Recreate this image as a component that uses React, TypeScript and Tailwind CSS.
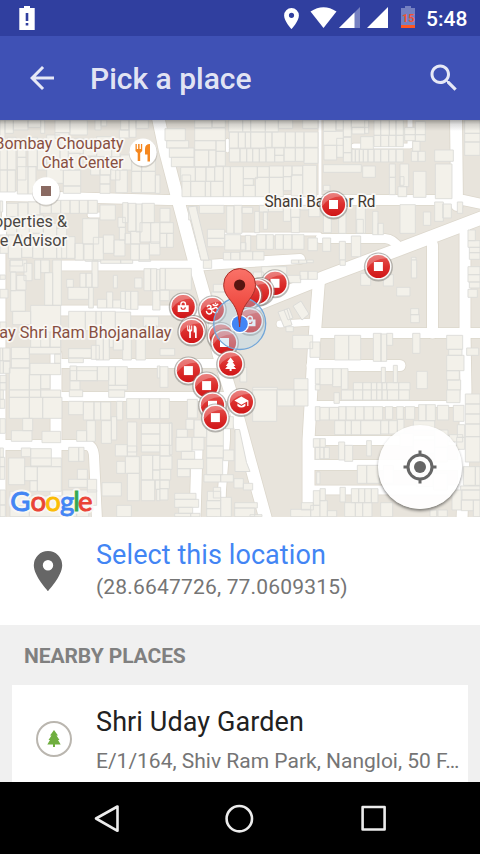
import React from 'react';

type Tile = { x: number; y: number; blocks: string };

// Building footprints per map tile, "x1 y1 x2 y2" at three units per pixel.
const TILES: Tile[] = [
  {
    x: 0,
    y: 120,
    blocks: `0 0 15 52;15 0 40 40;40 0 84 30;84 0 122 22;122 0 134 40;165 0 210 38;165 38 207 55;210 0 262 45;285 0 303 30;303 0 320 18;362 0 387 30;387 0 408 52;408 0 445 25;358 30 388 54;
      0 85 22 150;22 52 48 150;0 150 22 216;22 150 46 216;52 75 78 112;52 112 78 180;52 140 84 222;84 52 112 140;84 140 108 222;112 60 140 150;140 45 180 130;180 55 205 150;140 130 190 190;190 150 242 198;190 198 242 220;205 55 250 100;205 100 240 150;250 60 290 108;290 50 335 110;335 75 360 150;272 110 300 165;300 130 332 165;300 165 330 192;300 192 330 220;332 110 360 180;347 150 382 218;362 105 395 150;395 118 425 154;395 154 424 218;424 154 466 218;425 118 466 154;466 165 480 220;
      0 243 8 276;20 250 54 290;54 248 84 300;84 246 120 285;120 241 154 280;154 241 182 280;182 241 210 280;210 241 238 280;238 241 264 280;264 241 292 280;20 290 50 345;50 300 88 360;88 285 130 340;130 310 170 362;170 325 200 415;300 255 346 300;354 292 376 322;368 248 384 308;384 250 408 334;408 252 426 336;426 250 463 308;358 322 376 360;248 296 296 372;252 372 280 420;280 352 310 420;310 345 342 400;342 360 375 408;375 340 392 372;392 334 420 372;420 308 452 366;452 308 480 370;392 372 418 420;418 372 448 420;448 366 480 405;0 345 25 400;25 345 65 415;65 360 98 412;98 340 130 415;130 362 170 415;185 350 225 415;225 370 250 420`,
  },
  {
    x: 160,
    y: 120,
    blocks: `15 26 76 62;20 62 86 84;28 84 102 112;34 112 102 140;104 0 156 24;156 0 196 22;104 24 196 62;104 62 168 90;104 90 146 140;146 90 168 140;168 62 196 94;168 94 196 138;
      206 0 248 36;248 0 272 36;272 0 316 36;316 0 355 36;355 0 398 25;428 0 474 25;208 36 235 84;235 36 256 84;256 36 272 84;272 36 316 84;316 36 336 82;336 36 376 82;376 36 406 82;406 36 432 82;432 36 474 82;208 86 240 126;240 86 260 126;260 86 278 126;278 86 298 126;298 86 318 126;318 84 344 126;344 84 372 106;344 106 372 126;372 84 406 124;406 84 432 124;432 84 474 130;
      62 142 106 184;66 165 92 230;92 184 136 230;106 142 138 184;138 142 164 184;136 184 152 230;152 184 190 230;164 140 190 184;190 140 211 230;211 140 250 230;250 140 292 176;250 176 280 196;250 196 286 230;292 140 328 172;286 172 328 230;328 138 370 172;328 172 370 230;370 138 396 170;370 170 394 212;396 138 428 165;394 165 428 228;428 136 470 230;
      0 265 30 306;0 308 40 340;0 340 20 382;20 340 40 382;118 256 192 280;86 260 112 300;200 258 222 340;222 256 246 340;246 262 278 280;284 274 298 338;298 256 325 276;310 276 322 328;325 256 370 275;370 256 392 304;392 256 420 292;394 292 418 338;420 256 445 270;446 258 480 290;142 328 194 355;142 355 194 380;194 344 242 390;242 368 258 390;256 346 272 392;290 344 318 388;318 344 340 388;346 344 370 388;370 344 396 388;396 344 432 388;444 354 472 392;190 397 212 420;212 397 240 420;240 395 278 420;278 395 312 420`,
  },
  {
    x: 320,
    y: 120,
    blocks: `10 0 48 34;48 0 70 30;70 0 94 50;94 0 146 22;96 22 134 42;122 50 160 88;134 0 146 40;162 0 182 46;182 0 208 46;208 0 228 46;228 0 250 46;10 34 70 76;12 76 50 120;50 55 70 112;70 52 94 98;70 98 94 126;162 46 182 80;182 46 206 80;206 46 228 80;228 46 250 80;96 88 106 126;106 88 118 126;118 88 130 126;130 88 144 126;144 88 162 126;162 88 182 126;182 88 206 126;206 88 228 126;228 88 250 126;
      254 22 286 44;286 4 316 44;254 44 286 62;286 44 316 64;278 64 300 94;274 94 294 124;294 94 316 124;344 90 400 124;346 132 396 236;434 0 480 40;434 40 480 66;434 66 480 106;
      10 134 124 157;128 138 166 172;208 132 226 172;208 172 226 224;240 132 266 200;234 200 260 230;240 170 252 196;280 154 318 232;10 196 30 212;240 254 286 340;310 276 332 316;344 246 370 304;368 252 394 294;412 246 428 280;10 258 34 338;56 258 78 340;108 258 136 340;110 298 130 340;158 274 174 344;174 310 190 344;8 354 32 394;58 364 76 420;94 348 122 410;444 330 466 362;444 362 480 382;448 382 480 398;448 398 480 418;274 412 288 420`,
  },
  {
    x: 0,
    y: 260,
    blocks: `30 0 68 18;32 36 48 92;30 0 80 36;72 10 96 62;104 0 122 58;122 0 148 38;134 38 158 136;158 0 184 136;50 46 78 90;32 92 76 154;38 154 92 194;92 136 182 262;122 216 150 262;150 216 182 262;34 262 88 296;34 296 88 324;88 262 182 282;90 310 182 344;164 282 182 310;28 324 88 390;88 344 122 390;122 344 150 386;0 45 16 58;0 88 24 114;0 186 18 226;0 264 8 302;8 264 30 302;0 302 10 340;10 304 30 340;0 346 18 368;0 368 18 390;
      200 58 220 82;240 40 258 82;258 40 276 82;276 2 294 82;204 82 266 118;266 82 280 144;292 118 320 144;320 96 338 144;338 120 362 144;340 46 352 84;362 94 376 146;376 94 392 148;392 94 414 148;404 54 426 84;432 26 452 92;452 26 470 92;470 28 480 92;458 92 480 150;256 0 302 4;302 0 362 10;362 0 398 10;416 0 452 4;
      206 154 256 212;256 154 288 212;288 154 304 212;304 154 346 212;346 156 392 212;430 170 476 200;206 266 274 294;206 294 250 308;274 256 298 298;288 212 310 300;310 212 328 300;328 212 340 262;340 230 370 270;368 212 394 300;408 212 436 300;436 196 470 230;210 318 230 362;210 332 292 362;230 320 292 362;292 320 326 362;326 320 346 376;346 320 382 376;326 376 382 390;210 362 240 390;472 318 480 354`,
  },
  {
    x: 160,
    y: 260,
    blocks: `0 25 16 90;16 25 94 90;0 90 28 122;130 0 155 25;160 73 218 96;155 96 210 130;280 36 310 72;305 20 380 60;378 46 422 68;420 34 444 58;444 34 472 58;394 0 416 10;416 0 440 10;440 0 460 8;378 200 400 215;398 226 458 266;450 246 480 292;466 326 480 372;466 374 480 390;240 322 260 366;0 320 24 382;278 382 352 390;352 388 402 390;402 356 444 390;0 266 44 286;124 160 146 210`,
  },
  {
    x: 320,
    y: 260,
    blocks: `60 0 76 16;274 0 290 54;444 20 480 44;444 44 480 66;448 66 480 84;444 88 472 112;122 40 152 76;190 44 220 78;230 82 270 108;272 146 296 164;272 164 298 188;44 226 86 300;86 226 122 300;160 220 184 304;182 222 200 304;200 220 218 256;278 220 300 280;380 226 428 268;386 268 426 286;380 286 432 332;380 332 418 360;382 360 422 390;440 264 476 286;290 334 322 386;0 326 38 374;38 326 64 380;64 326 84 388;184 322 196 368;220 316 232 368;100 368 128 390;128 368 154 390;154 368 170 390;170 368 186 390;186 368 200 390;200 368 236 390;236 368 270 390`,
  },
  {
    x: 0,
    y: 390,
    blocks: `28 0 88 22;88 0 122 22;122 0 182 22;28 22 88 85;88 22 128 85;128 22 186 85;68 85 98 122;34 122 96 154;126 124 182 158;64 174 92 200;92 176 154 228;26 204 74 284;74 230 112 272;112 230 184 304;92 204 184 230;90 272 112 304;0 0 10 28;0 28 14 55;0 86 16 130;0 174 10 202;0 202 14 230;0 230 14 268;0 300 16 345;0 345 16 380;
      208 0 248 20;326 0 374 22;206 34 250 74;250 36 282 90;282 36 302 90;302 36 332 90;350 34 368 90;380 26 418 86;418 26 448 86;448 26 480 86;230 122 260 154;260 92 286 154;304 92 334 160;334 80 350 150;206 172 236 214;236 172 252 214;232 238 262 268;206 268 262 292;262 268 290 306;306 278 364 318;350 214 376 250;346 164 382 198;382 96 410 186;382 168 410 198;376 200 418 250;382 250 418 332;424 100 480 132;424 132 480 166;424 166 480 186;424 196 458 270;458 196 480 240;458 240 480 270;424 270 464 332;466 270 480 298;470 298 480 332;350 346 394 380;30 304 88 348;88 318 184 380;30 348 88 380;188 300 290 346;190 346 230 380;230 346 266 380`,
  },
  {
    x: 160,
    y: 390,
    blocks: `0 26 28 86;28 98 36 194;0 100 36 166;0 166 30 198;0 198 36 238;0 238 32 270;0 270 28 296;0 296 24 330;82 28 112 84;78 88 102 118;102 90 140 142;50 118 82 142;48 142 96 184;96 142 132 180;64 184 104 208;52 208 130 236;52 236 90 260;140 110 190 168;140 168 190 204;140 204 188 254;190 180 222 212;196 80 220 116;132 254 182 276;182 254 220 276;160 292 182 324;142 304 182 332;140 332 182 356;140 356 182 380;182 322 214 380;44 310 108 328;44 328 116 352;56 352 98 370;44 370 92 380;92 370 120 380;222 266 250 294;250 280 278 300;224 338 292 354;224 354 284 380;270 374 306 380;278 0 350 94;352 0 402 48;404 0 444 48;466 50 480 92;460 146 480 172;466 172 480 208;470 246 480 282;460 302 480 346;424 338 460 360;392 358 452 380;452 346 480 380`,
  },
  {
    x: 320,
    y: 390,
    blocks: `64 0 100 30;100 0 128 30;128 0 154 30;154 0 170 30;170 0 186 30;186 0 202 30;202 0 236 30;236 0 268 30;42 8 58 40;380 0 420 38;0 52 28 90;28 52 56 90;56 50 78 90;78 50 106 90;106 50 132 90;132 50 160 90;160 50 188 90;196 50 218 88;230 50 250 88;256 50 284 88;296 44 318 92;318 44 346 92;352 46 386 90;400 46 432 94;44 92 76 134;76 92 94 134;94 92 122 134;122 92 182 134;182 92 206 132;206 92 232 132;232 88 252 130;280 92 344 120;344 120 384 172;412 104 434 142;388 134 428 156;410 142 434 178;436 12 480 42;436 42 480 72;436 72 480 102;436 102 480 140;436 140 480 216;
      0 146 16 172;0 172 12 206;12 172 28 206;56 156 74 210;74 166 98 214;140 152 154 198;112 226 140 280;140 226 178 280;190 226 220 280;240 130 280 170;280 150 344 190;344 172 382 216;60 292 76 336;94 296 116 338;116 296 134 338;134 296 154 338;154 296 174 338;0 296 16 332;0 332 22 380;22 362 50 380;74 338 106 380;106 338 128 380;128 338 156 380;182 338 218 380;290 240 340 290;340 250 382 300;330 360 350 380;354 360 382 380;430 230 466 286;466 230 480 286;422 288 480 300;426 300 480 330;424 330 460 362;460 330 480 380;396 300 424 360`,
  },
];

const BUILDINGS = TILES.map((t) => ({
  ...t,
  d: t.blocks
    .split(';')
    .map((b) => {
      const [x1, y1, x2, y2] = b.trim().split(/\s+/);
      return `M${x1} ${y1}H${x2}V${y2}H${x1}Z`;
    })
    .join(''),
}));

// Street centre lines with their widths.
const STREETS: [string, number][] = [
  ['M-2 196L60 197L168 200H463L482 204', 10],
  ['M157 112L165 150L178 200L194 260L207 305L219 355L233 400L266 520', 12.5],
  ['M226 415V440L222 490L221 520', 8],
  ['M61 265.500H200L250 262L300 259', 10],
  ['M61 310.500H205', 10],
  ['M61 363.500H225', 9],
  ['M61 396.500H232', 9],
  ['M-2 445H86Q93 445 94 456L97 520', 10],
  ['M56 354V520', 11],
  ['M2.500 230V520', 6],
  ['M484 217L405 247L325 277L255 305L240 325', 13],
  ['M456 115L457 205', 12],
  ['M432.500 245V333', 11],
  ['M465 232V333L466 390L462 520', 11],
  ['M319 280L314 345L308.500 440V520', 12],
  ['M314 333H482', 10],
  ['M312 365.500H400', 11],
  ['M225 234H320', 3],
  ['M320 238.500H385Q394 239 400 249', 9],
  ['M354 146H410V120', 5],
  ['M308 404H466', 6],
  ['M308 440.500H460', 9],
  ['M308 465H460', 10],
  ['M308 490H460', 9],
  ['M197 450L195 520', 11],
  ['M320 120V200', 3],
  ['M280 324L314 322', 7],
  ['M227.500 140V151', 3],
  ['M90 215H102', 5],
  ['M4 200V240', 4],
];

const PATH_SQUARE = 'M-4.500-4.500h9v9h-9z';
const PATH_BAG =
  'M-5.500-1.500h2.500V-2.500a3 3 0 0 1 6 0V-1.500h2.500V5.200h-11zM-1.600-1.500h3.200V-2.500a1.600 1.600 0 0 0-3.200 0zM-2.600 .5a2.600 2.600 0 0 0 5.200 0h-1.100a1.500 1.500 0 0 1-3 0z';
const PATH_FORK = 'M-4.500-6h1v4h1v-4h1v4h1v-4h1v5l-1.300 1.500V6.500h-1.700V.5L-4.500-1zM2-6Q5-6 5-2V6.500H3.300V1H2z';
const PATH_TREE = 'M0-6.500L3.500-2H2L4.800 2H3L5.500 5H1V7H-1V5H-5.500L-3 2H-4.800L-2-2H-3.500z';
const PATH_CAP = 'M-7-1.500L0-5.500L7-1.500V4H5.800V-.5L0 2.700zM-4 1.500L0 4L4 1.500V4Q0 7-4 4z';

type Poi = { x: number; y: number; icon: string };
const POIS: Poi[] = [
  { x: 275, y: 283.3, icon: PATH_SQUARE },
  { x: 260.5, y: 291, icon: PATH_SQUARE },
  { x: 257.5, y: 292, icon: '' },
  { x: 248, y: 295.5, icon: '' },
  { x: 183.2, y: 306.7, icon: PATH_BAG },
  { x: 212.3, y: 309.6, icon: 'om' },
  { x: 193, y: 329, icon: '' },
  { x: 191.7, y: 331.5, icon: PATH_FORK },
  { x: 250, y: 321, icon: PATH_BAG },
  { x: 221, y: 336, icon: '' },
  { x: 224.5, y: 342.5, icon: PATH_SQUARE },
  { x: 230.6, y: 364, icon: PATH_TREE },
  { x: 188.4, y: 370.6, icon: PATH_SQUARE },
  { x: 206.6, y: 385.6, icon: PATH_SQUARE },
  { x: 212.5, y: 405.3, icon: PATH_SQUARE },
  { x: 215.4, y: 417.6, icon: PATH_SQUARE },
  { x: 241.4, y: 402, icon: PATH_CAP },
  { x: 333.5, y: 204.5, icon: PATH_SQUARE },
  { x: 378.4, y: 266.5, icon: PATH_SQUARE },
];

function Marker({ x, y, icon }: Poi) {
  return (
    <g transform={`translate(${x} ${y})`}>
      <circle r="14.500" cy=".4" fill="#8b8883" opacity=".6" />
      <circle r="13.100" fill="#fbfafa" />
      <circle r="11.600" fill="url(#poi)" />
      <path d="M-11.400 2A11.500 11.500 0 0 1 8-8.200Q-5-8-11.400 2Z" fill="#fff" opacity=".25" />
      {icon === 'om' ? (
        <g fill="none" stroke="#fff" strokeWidth="1.500" strokeLinecap="round">
          <path d="M-5-3.200Q-3.500-5-1.800-3.800Q-.5-2 -3-.8Q.2-.6-.3 2.200Q-1.200 5-4 4.200Q-5.500 3.600-5.800 2" />
          <path d="M-1.500-.6Q1-.2 2.200-1.600Q4.200-3 5.200-.6Q5.800 2.800 3 3.200Q1.600 3.200 1.300 2" />
          <path d="M.8-5Q3.200-2.800 5.400-5.400M3.200-6.300h.1" />
        </g>
      ) : (
        <path d={icon} fill="#fff" fillRule="evenodd" />
      )}
    </g>
  );
}

function Streets({ casing }: { casing?: boolean }) {
  return (
    <g fill="none" strokeLinecap="round" strokeLinejoin="round" stroke={casing ? '#dcd7cc' : '#fff'}>
      {STREETS.map(([d, w]) => (
        <path key={d} d={d} strokeWidth={casing ? w + 1.6 : w} />
      ))}
    </g>
  );
}

const halo = { stroke: '#fbfaf7', strokeWidth: 3.5, strokeOpacity: 0.9, paintOrder: 'stroke', strokeLinejoin: 'round' } as const;

const GOOGLE: [string, number, string][] = [
  ['G', 10.2, '#4285f4'],
  ['o', 30.6, '#ea4335'],
  ['o', 45.2, '#fbbc05'],
  ['g', 60, '#4285f4'],
  ['l', 73.2, '#34a853'],
  ['e', 78, '#ea4335'],
];

function MapView() {
  return (
    <div className="relative h-[397px] overflow-hidden bg-[#e8e4dc]">
      <svg width="480" height="397" viewBox="0 120 480 397" className="block font-[Roboto,sans-serif]">
        <defs>
          <linearGradient id="poi" x1="0" y1="0" x2="0" y2="1">
            <stop offset="0" stopColor="#e45552" />
            <stop offset=".5" stopColor="#dc2f2d" />
            <stop offset="1" stopColor="#d01517" />
          </linearGradient>
          <linearGradient id="pin" x1="0" y1="0" x2="0" y2="1">
            <stop offset="0" stopColor="#fa7268" />
            <stop offset="1" stopColor="#e8352c" />
          </linearGradient>
          <linearGradient id="bar-shadow" x1="0" y1="0" x2="0" y2="1">
            <stop offset="0" stopColor="#000" stopOpacity=".34" />
            <stop offset=".4" stopColor="#000" stopOpacity=".13" />
            <stop offset="1" stopColor="#000" stopOpacity="0" />
          </linearGradient>
        </defs>
        <rect y="120" width="480" height="397" fill="#e8e4dc" />
        <Streets casing />
        <Streets />
        {BUILDINGS.map((t) => (
          <path
            key={`${t.x}-${t.y}`}
            d={t.d}
            transform={`translate(${t.x} ${t.y}) scale(.33333)`}
            fill="#f3f1ea"
            stroke="#dcdcd9"
            strokeWidth="2.700"
          />
        ))}
        <path d="M235 429.500h4.500l7 33l3.500 9h-15z" fill="#f3f1ea" stroke="#dcdcd9" />
        <path d="M278 312l9-3 5 16-8 2zM284 310l5-2 4 10-5 2zM293 306l8-5 8 13-7 6z" fill="#f3f1ea" stroke="#dcdcd9" />
        <path d="M188 207l8-1 13 54-8 0z" fill="#f3f1ea" stroke="#dcdcd9" />
        <rect y="120" width="480" height="11" fill="url(#bar-shadow)" />

        <g fontSize="16.200" {...halo}>
          <g fill="#874f41">
            <text x="-5.500" y="149.300" textLength="129" lengthAdjust="spacingAndGlyphs">Bombay Choupaty</text>
            <text x="41.500" y="168" textLength="82" lengthAdjust="spacingAndGlyphs">Chat Center</text>
            <text x="171.500" y="338.300" textAnchor="end">Jay Shri Ram Bhojanallay</text>
          </g>
          <g fill="#4b4743" textAnchor="end">
            <text x="67" y="227">Properties &amp;</text>
            <text x="67" y="245.500">ce Advisor</text>
          </g>
          <text x="264.500" y="207" textLength="111" lengthAdjust="spacingAndGlyphs" fill="#42372f">
            Shani Bazaar Rd
          </text>
        </g>

        <circle cx="143.200" cy="153.400" r="14.200" fill="#8e8a84" opacity=".35" />
        <circle cx="143" cy="152.300" r="13.700" fill="#fff" />
        <path
          d="M135.500 144h1.300v5h1.300v-5h1.500v5h1.300v-5h1.300v7l-2 2v8h-2.500v-8l-2.200-2zM145 149Q145 144 150 144V161.500h-2.500v-7H145z"
          fill="#f5871f"
        />
        <circle cx="46.200" cy="192.300" r="14.200" fill="#8e8a84" opacity=".35" />
        <circle cx="46" cy="191" r="13.700" fill="#fff" />
        <path d="M41 186h10v10H41z" fill="#8a6a62" />

        {POIS.map((p) => (
          <Marker key={`${p.x}-${p.y}`} {...p} />
        ))}

        <circle cx="239.700" cy="323.500" r="26" fill="#b5d3e6" fillOpacity=".4" stroke="#72a6d8" strokeWidth="1.300" />
        <circle cx="239.800" cy="324" r="9.300" fill="#fff" />
        <circle cx="239.800" cy="324" r="8" fill="#4285f4" />
        <path
          d="M239.600 327C238.500 308 233 304 227.500 296.500C224.500 292 223.700 288.500 223.700 284.500A15.900 15.900 0 0 1 255.500 284.500C255.500 288.500 254.500 292 251.500 296.500C246.500 304 240.700 308 239.600 327Z"
          fill="url(#pin)"
          stroke="#a82f29"
          strokeWidth="1"
        />
        <circle cx="239.600" cy="285" r="5.600" fill="#561511" />

        <g fontSize="27.500" className="font-[Lato,sans-serif]">
          {GOOGLE.map(([ch, x]) => (
            <text key={`h${x}`} x={x} y="511" fill="none" stroke="#f8f7f3" strokeWidth="5" strokeLinejoin="round" aria-hidden="true">
              {ch}
            </text>
          ))}
          {GOOGLE.map(([ch, x, color]) => (
            <text key={x} x={x} y="511" fill={color} stroke={color} strokeWidth=".9">
              {ch}
            </text>
          ))}
        </g>
      </svg>
      <button
        aria-label="My location"
        className="absolute left-[378px] top-[305px] flex size-[84px] items-center justify-center rounded-full bg-white/93 shadow-[0_2px_3px_rgba(0,0,0,0.45)]"
      >
        <svg width="34" height="34" viewBox="0 0 34 34" fill="none" stroke="#666" strokeWidth="3">
          <circle cx="17" cy="17" r="12" />
          <circle cx="17" cy="17" r="6" fill="#666" stroke="none" />
          <path d="M17 .5V5M17 29v4.500M.5 17H5M29 17h4.500" />
        </svg>
      </button>
    </div>
  );
}

function StatusBar() {
  return (
    <div className="flex h-9 items-center bg-[#303f9f]">
      <svg width="420" height="36" viewBox="0 0 420 36">
        <path d="M24 6h6v2h4.700v22H19.300V8H24z" fill="#fff" />
        <path d="M25.700 13h2.600v8h-2.600zM25.700 23h2.600v2.500h-2.600z" fill="#303f9f" />
        <path
          fillRule="evenodd"
          fill="#fff"
          d="M291.500 8a7.400 7.400 0 0 1 7.400 7.400C298.900 21 291.500 29 291.500 29S284.100 21 284.100 15.400A7.400 7.400 0 0 1 291.500 8zm0 4.700a2.600 2.600 0 1 0 0 5.200a2.600 2.600 0 0 0 0-5.200z"
        />
        <path d="M310.500 11.500Q323.500 3 336.500 11.500L323.500 28z" fill="#fff" />
        <path d="M339 28L360 7V28z" fill="#7580c1" />
        <path d="M339 28L354.500 12.500V28z" fill="#fff" />
        <path d="M367 28L388 7V28z" fill="#fff" />
        <path d="M405 6h6v2h4v17.500h-14V8h4z" fill="#7580c1" />
        <path d="M401 25h14v3h-14z" fill="#ff5722" />
        <text x="408.200" y="21.500" textAnchor="middle" fontSize="11" fontWeight="700" fill="#f4512c" className="font-[Roboto,sans-serif]">
          15
        </text>
      </svg>
      <span className="mt-[2px] ml-[6px] text-[21px] leading-6 font-medium text-white">5:48</span>
    </div>
  );
}

function AppBar() {
  return (
    <header className="flex h-[84px] items-center bg-[#3f51b5] text-white/87">
      <svg className="ml-6" width="36" height="36" viewBox="0 0 24 24" fill="currentColor">
        <path d="M20 11H7.830l5.590-5.590L12 4l-8 8 8 8 1.410-1.410L7.830 13H20v-2z" />
      </svg>
      <h1 className="mt-px ml-[30px] flex-1 text-[30px] leading-9 font-medium">Pick a place</h1>
      <svg className="-mt-px mr-[18px]" width="36" height="36" viewBox="0 0 24 24" fill="currentColor">
        <path d="M15.500 14h-.790l-.280-.270C15.410 12.590 16 11.110 16 9.500 16 5.910 13.090 3 9.500 3S3 5.910 3 9.500 5.910 16 9.500 16c1.610 0 3.090-.590 4.230-1.570l.270.280v.790l5 4.990L20.490 19l-4.990-5zm-6 0C7.010 14 5 11.990 5 9.500S7.010 5 9.500 5 14 7.010 14 9.500 11.990 14 9.500 14z" />
      </svg>
    </header>
  );
}

export default function App() {
  return (
    <div className="flex h-[854px] w-[480px] flex-col overflow-hidden bg-white font-[Roboto,sans-serif]">
      <StatusBar />
      <AppBar />
      <MapView />
      <section className="flex h-[108px] items-center bg-white">
        <svg className="ml-[33px] shrink-0" width="30" height="42" viewBox="0 0 30 42">
          <path
            fillRule="evenodd"
            fill="#666"
            d="M15 1a14.200 14.200 0 0 1 14.200 14.200C29.200 26 15 41 15 41S.8 26 .8 15.200A14.200 14.200 0 0 1 15 1zm0 9a5.200 5.200 0 1 0 0 10.400a5.200 5.200 0 0 0 0-10.400z"
          />
        </svg>
        <div className="mb-1 ml-[33px]">
          <p className="text-[27px] leading-9 tracking-[0.08px] text-[#4285f4]">Select this location</p>
          <p className="text-[21px] leading-7 tracking-[0.18px] text-[#757575]">(28.6647726, 77.0609315)</p>
        </div>
      </section>
      <section className="flex min-h-0 flex-1 flex-col bg-[#f0f0f0] px-3">
        <h2 className="flex h-[60px] items-center pt-1 pl-3 text-[21px] font-bold tracking-[-0.08px] text-[#808080]">
          NEARBY PLACES
        </h2>
        <div className="flex flex-1 bg-white">
          <svg className="mt-9 ml-6 shrink-0" width="36" height="36" viewBox="0 0 36 36">
            <circle cx="18" cy="18" r="17" fill="#fff" stroke="#bab6af" strokeWidth="2" />
            <path d="M18 9l4 5.500h-1.500l3 4.500H22l2.700 4.500H19V26h-2v-2.500h-5.700L14 19h-1.500l3-4.500H14z" fill="#6fae3f" />
          </svg>
          <div className="ml-6 min-w-0 flex-1 pt-[19px]">
            <p className="text-[27px] leading-9 tracking-[0.1px] text-[#212121]">Shri Uday Garden</p>
            <p className="mt-[7px] text-[21px] leading-7 whitespace-nowrap text-[#757575]">E/1/164, Shiv Ram Park, Nangloi, 50 F…</p>
          </div>
        </div>
      </section>
      <nav className="h-[72px] shrink-0 bg-black">
        <svg width="480" height="72" viewBox="0 0 480 72" fill="none" stroke="#ececec" strokeWidth="2.600" strokeLinejoin="round">
          <path d="M96 36.500L117.500 24.500V48.800z" />
          <circle cx="239.300" cy="36.700" r="12.700" />
          <rect x="362.600" y="25" width="22" height="22.500" />
        </svg>
      </nav>
    </div>
  );
}
